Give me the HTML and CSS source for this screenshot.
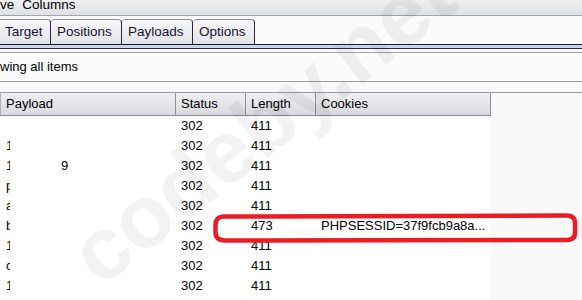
FILE: index.html
```html
<!DOCTYPE html>
<html>
<head>
<meta charset="utf-8">
<link rel="stylesheet" href="styles.css">
</head>
<body>
<div class="screen">
  <div class="menubar"><span>ve</span><span>Columns</span></div>
  <div class="tabbar">
    <div class="tab t1">Target</div>
    <div class="tab t2">Positions</div>
    <div class="tab t3">Payloads</div>
    <div class="tab t4">Options</div>
  </div>
  <div class="tabline"></div>
  <div class="filter">wing all items</div>
  <div class="tablewrap">
    <div class="table">
      <div class="row head">
        <div class="c c1">Payload</div><div class="c">Status</div><div class="c">Length</div><div class="c">Cookies</div>
      </div>
      <div class="row"><div class="c c1"></div><div class="c">302</div><div class="c">411</div><div class="c"></div></div>
      <div class="row"><div class="c c1"><span class="clip">1</span></div><div class="c">302</div><div class="c">411</div><div class="c"></div></div>
      <div class="row"><div class="c c1"><span class="clip">1</span><span class="nine">9</span></div><div class="c">302</div><div class="c">411</div><div class="c"></div></div>
      <div class="row"><div class="c c1"><span class="clip">p</span></div><div class="c">302</div><div class="c">411</div><div class="c"></div></div>
      <div class="row"><div class="c c1"><span class="clip">a</span></div><div class="c">302</div><div class="c">411</div><div class="c"></div></div>
      <div class="row"><div class="c c1"><span class="clip">b</span></div><div class="c">302</div><div class="c">473</div><div class="c">PHPSESSID=37f9fcb9a8a...</div></div>
      <div class="row"><div class="c c1"><span class="clip">1</span></div><div class="c">302</div><div class="c">411</div><div class="c"></div></div>
      <div class="row"><div class="c c1"><span class="clip">c</span></div><div class="c">302</div><div class="c">411</div><div class="c"></div></div>
      <div class="row"><div class="c c1"><span class="clip">1</span></div><div class="c">302</div><div class="c">411</div><div class="c"></div></div>
    </div>
  </div>
  <div class="wm">codeby.net</div>
  <svg class="mark" width="582" height="300" viewBox="0 0 582 300">
    <path d="M 223 216.5 L 566 215.5 Q 575 215.5 575 223 L 575 233 Q 575 240 566 240 L 225 240.5 Q 215.5 240.5 215.5 232 L 215.5 225 Q 215.5 217 223 216.5 Z" fill="none" stroke="#ec1c24" stroke-width="4.5"/>
  </svg>
</div>
</body>
</html>
```
FILE: styles.css
```css
html, body {
  margin: 0;
  padding: 0;
}
body {
  width: 582px;
  height: 300px;
  overflow: hidden;
  background: #f9f9f9;
  font-family: "Liberation Sans", Arial, sans-serif;
  font-size: 13px;
  color: #000;
}
.screen {
  position: relative;
  width: 582px;
  height: 300px;
  overflow: hidden;
}
.menubar {
  height: 15px;
  line-height: 9px;
  border-bottom: 1px solid #a2a3ab;
  background: linear-gradient(#f0f0f3, #dfe0e5);
  display: flex;
  gap: 8px;
  white-space: nowrap;
  font-size: 13.5px;
}
.tabbar {
  height: 28px;
  display: flex;
  align-items: flex-end;
  background: #fbfbfb;
}
.tab {
  box-sizing: border-box;
  height: 25px;
  line-height: 24px;
  padding-left: 6px;
  font-size: 13.5px;
  border-top: 1px solid #8f8f9c;
  border-right: 1px solid #2e2440;
  border-radius: 4px 4px 0 0;
  background: linear-gradient(#f7f7f9, #e3e4e8);
  color: #15152e;
  white-space: nowrap;
}
.t1 {
  width: 53px;
  margin-left: -2px;
  padding-left: 7px;
  border-top-left-radius: 0;
}
.t2 { width: 71px; }
.t3 { width: 71px; }
.t4 { width: 62px; }
.tabline {
  height: 3px;
  border-top: 1px solid #1b1b30;
  border-bottom: 1px solid #2a2a40;
  background: #c9d7e9;
}
.filter {
  margin-top: 3px;
  height: 28px;
  line-height: 28px;
  border-top: 1px solid #a3a3a6;
  border-bottom: 1px solid #9c9c9f;
  background: #fbfbfb;
  white-space: nowrap;
}
.tablewrap {
  margin-top: 10px;
  border-top: 1px solid #9b9ca4;
  height: 220px;
}
.table {
  width: 491px;
  height: 100%;
  background: #fff;
}
.row {
  display: grid;
  grid-template-columns: 176px 70px 70px 175px;
  height: 20px;
  line-height: 20px;
}
.row .c {
  padding-left: 5px;
  white-space: nowrap;
  overflow: hidden;
}
.row .c1 {
  padding-left: 6px;
  display: flex;
}
.row.head {
  height: 22px;
  line-height: 22px;
  border-bottom: 1px solid #8a8b93;
  background: linear-gradient(#eeeff1, #d9dadf);
}
.row.head .c {
  border-right: 1px solid #8f9098;
}
.row.head .c1 {
  border-left: 1px solid #b0b1b8;
  padding-left: 5px;
}
.clip {
  display: inline-block;
  width: 4px;
  overflow: hidden;
}
.nine {
  margin-left: 51px;
}
.wm {
  position: absolute;
  left: 98px;
  top: 215px;
  font-family: "Liberation Sans", Arial, sans-serif;
  font-weight: 700;
  font-size: 88px;
  line-height: 88px;
  color: rgba(0, 0, 0, 0.05);
  transform: rotate(-38deg);
  transform-origin: 0 70px;
  white-space: nowrap;
  pointer-events: none;
}
.mark {
  position: absolute;
  left: 0;
  top: 0;
}
```
